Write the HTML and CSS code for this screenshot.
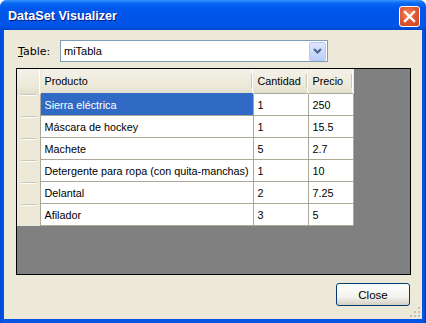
FILE: index.html
```html
<!DOCTYPE html>
<html lang="en">
<head>
    <meta charset="UTF-8">
    <title>DataSet Visualizer</title>
    <link rel="stylesheet" href="styles.css">
</head>
<body>
    <div class="window">
        <div class="titlebar">
            <span class="title">DataSet Visualizer</span>
            <button class="title-close" aria-label="Close">
                <svg width="13" height="13" viewBox="0 0 13 13"><path d="M2 2 L11 11 M11 2 L2 11" stroke="#fff" stroke-width="2.4" stroke-linecap="square"/></svg>
            </button>
        </div>
        <div class="frame">
            <div class="client">
                <div class="table-row">
                    <label class="table-label"><u>T</u>able:</label>
                    <div class="combo">
                        <span class="combo-text">miTabla</span>
                        <span class="combo-button">
                            <svg width="9" height="6" viewBox="0 0 9 6"><path d="M1 1 L4.5 4.5 L8 1" stroke="#4d6185" stroke-width="2" fill="none"/></svg>
                        </span>
                    </div>
                </div>
                <div class="grid">
                    <table class="data">
                        <colgroup>
                            <col class="col-head">
                            <col class="col-prod">
                            <col class="col-cant">
                            <col class="col-prec">
                        </colgroup>
                        <thead>
                            <tr>
                                <th class="corner"></th>
                                <th>Producto</th>
                                <th>Cantidad</th>
                                <th>Precio</th>
                            </tr>
                        </thead>
                        <tbody>
                            <tr><td class="rowhead"></td><td class="selected">Sierra eléctrica</td><td>1</td><td>250</td></tr>
                            <tr><td class="rowhead"></td><td>Máscara de hockey</td><td>1</td><td>15.5</td></tr>
                            <tr><td class="rowhead"></td><td>Machete</td><td>5</td><td>2.7</td></tr>
                            <tr><td class="rowhead"></td><td>Detergente para ropa (con quita-manchas)</td><td>1</td><td>10</td></tr>
                            <tr><td class="rowhead"></td><td>Delantal</td><td>2</td><td>7.25</td></tr>
                            <tr><td class="rowhead"></td><td>Afilador</td><td>3</td><td>5</td></tr>
                        </tbody>
                    </table>
                </div>
                <div class="footer">
                    <button class="close-button">Close</button>
                </div>
                <svg class="grip" width="12" height="12" viewBox="0 0 12 12">
                    <g fill="#c5c2b2">
                        <rect x="9" y="1" width="2" height="2"/>
                        <rect x="5" y="5" width="2" height="2"/><rect x="9" y="5" width="2" height="2"/>
                        <rect x="1" y="9" width="2" height="2"/><rect x="5" y="9" width="2" height="2"/><rect x="9" y="9" width="2" height="2"/>
                    </g>
                </svg>
            </div>
        </div>
    </div>
</body>
</html>
```

FILE: styles.css
```css
body {
    margin: 0;
    padding: 0;
    font-family: Tahoma, "DejaVu Sans", sans-serif;
    background-color: #fff;
}
.window {
    width: 426px;
    height: 323px;
    display: flex;
    flex-direction: column;
    background-color: #0054e3;
    border-radius: 7px 7px 0 0;
    overflow: hidden;
}
.titlebar {
    height: 30px;
    flex: none;
    display: flex;
    align-items: center;
    justify-content: space-between;
    padding: 0 6px 0 8px;
    background: linear-gradient(to bottom, #3d95ff 0px, #0a6af2 3px, #0058ee 8px, #0054e3 20px, #0055eb 26px, #0046c8 30px);
}
.title {
    color: #fff;
    font-family: "Liberation Sans", sans-serif;
    font-weight: bold;
    font-size: 12.6px;
    text-shadow: 1px 1px 0 #0a1e8a;
    margin-top: 1px;
}
.title-close {
    width: 21px;
    height: 21px;
    padding: 0;
    margin-top: 3px;
    border: 1px solid #fff;
    border-radius: 3px;
    background: radial-gradient(circle at 40% 35%, #f0865f 0%, #e25a33 45%, #c8421f 100%);
    display: flex;
    align-items: center;
    justify-content: center;
}
.frame {
    flex: 1;
    display: flex;
    padding: 0 4px 4px 4px;
    background: linear-gradient(to right, #0045d6, #0054e3 2px, #0054e3 calc(100% - 2px), #0033b4);
}
.client {
    flex: 1;
    position: relative;
    background-color: #ece9d8;
    display: flex;
    flex-direction: column;
    padding: 10px 11px 13px 12px;
    font-size: 11px;
}
.table-row {
    display: flex;
    align-items: center;
    height: 22px;
}
.table-label {
    width: 42px;
    padding-left: 2px;
    font-family: "DejaVu Sans", sans-serif;
    font-size: 11px;
    color: #000;
}
.combo {
    width: 266px;
    height: 20px;
    border: 1px solid #7f9db9;
    background-color: #fff;
    display: flex;
    align-items: center;
    justify-content: space-between;
}
.combo-text {
    padding-left: 3px;
    font-family: "Liberation Sans", sans-serif;
    font-size: 11px;
    color: #000;
}
.combo-button {
    width: 15px;
    height: 17px;
    margin-right: 1px;
    border: 1px solid #b9c9ef;
    border-radius: 2px;
    background: linear-gradient(to bottom, #dce6fd, #bccffb);
    display: flex;
    align-items: center;
    justify-content: center;
}
.grid {
    margin-top: 6px;
    height: 205px;
    border: 1px solid #000;
    background-color: #808080;
}
.data {
    table-layout: fixed;
    width: 336px;
    border-collapse: collapse;
    font-family: "Liberation Sans", sans-serif;
    font-size: 10.8px;
    color: #000;
}
.col-head {
    width: 23px;
}
.col-prod {
    width: 213px;
}
.col-cant {
    width: 55px;
}
.col-prec {
    width: 45px;
}
.data th {
    height: 24px;
    padding: 0 4px;
    text-align: left;
    font-weight: normal;
    background: linear-gradient(to bottom, #f3f1e9, #ece9d8 70%, #e2decd);
    border-right: 1px solid #ece9d8;
    position: relative;
    box-shadow: inset -1px 0 0 #fff;
}
.data th::after {
    content: "";
    position: absolute;
    right: 1px;
    top: 5px;
    bottom: 5px;
    width: 1px;
    background-color: #cbc7b8;
}
.data th.corner::after {
    display: none;
}
.data td {
    height: 21px;
    padding: 0 3px 0 4px;
    background-color: #fff;
    border: 1px solid #aca899;
    white-space: nowrap;
    overflow: hidden;
}
.data td.rowhead {
    background-color: #ece9d8;
    border: none;
    position: relative;
}
.data td.rowhead::before {
    content: "";
    position: absolute;
    left: 4px;
    right: 4px;
    top: 0;
    height: 1px;
    background-color: #c9c5b5;
    box-shadow: 0 1px 0 #fff;
}
.data td.selected {
    background-color: #316ac5;
    color: #fff;
    border-color: #316ac5 #aca899 #aca899 #aca899;
}
.footer {
    margin-top: 8px;
    display: flex;
    justify-content: flex-end;
}
.close-button {
    width: 74px;
    height: 23px;
    padding: 0;
    border: 1px solid #003c74;
    border-radius: 3px;
    background: linear-gradient(to bottom, #ffffff, #f4f3ee 60%, #d6d0c5);
    font-family: "Liberation Sans", sans-serif;
    font-size: 11.5px;
    color: #000;
    margin-right: 1px;
}
.grip {
    position: absolute;
    right: 1px;
    bottom: 1px;
}
```
